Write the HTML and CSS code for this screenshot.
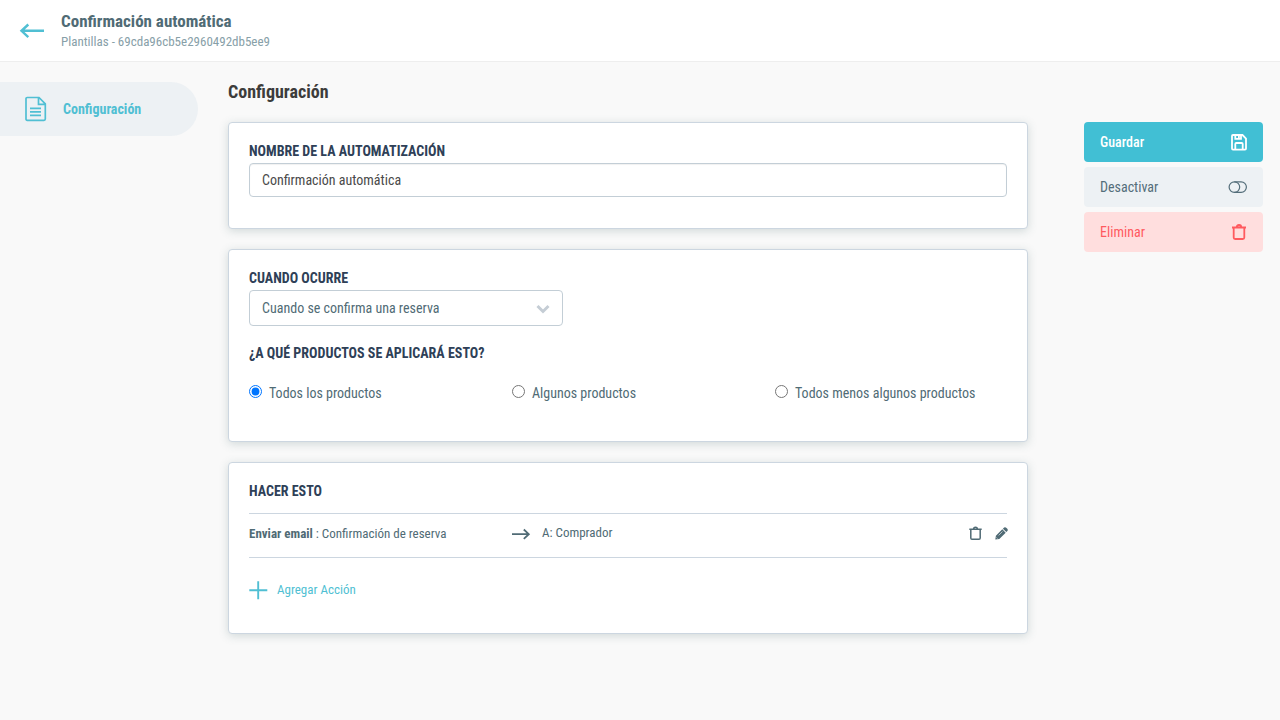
FILE: index.html
```
<!DOCTYPE html>
<html lang="es">
<head>
<meta charset="utf-8">
<title>Confirmación automática</title>
<link rel="stylesheet" href="styles.css">
</head>
<body>
<header class="topbar">
  <svg class="back" width="26" height="18" viewBox="0 0 26 18"><path d="M25 8.800H2.500M9.300 2.500L2.500 8.800l6.800 6.300" /></svg>
  <div class="titles">
    <h1><span class="t">Confirmación automática</span></h1>
    <p><span class="t">Plantillas - 69cda96cb5e2960492db5ee9</span></p>
  </div>
</header>
<div class="layout">
  <nav class="side">
    <a class="side-item">
      <svg width="22" height="26" viewBox="0 0 22 26"><path d="M1 2.600Q1 1.500 2.200 1.500H14L20.300 7.800V23Q20.300 24.300 19 24.300H2.300Q1 24.300 1 23ZM13.500 1.500V8.300H20.300M5 12.300H16M5 15.800H16M5 19.300H16"/></svg>
      <span class="t">Configuración</span>
    </a>
  </nav>
  <main class="content">
    <h2><span class="t">Configuración</span></h2>
    <section class="card card-name">
      <h3><span class="t">NOMBRE DE LA AUTOMATIZACIÓN</span></h3>
      <div class="field field-text"><span class="t">Confirmación automática</span></div>
    </section>
    <section class="card card-when">
      <h3><span class="t">CUANDO OCURRE</span></h3>
      <div class="field field-select"><span class="t">Cuando se confirma una reserva</span>
        <svg width="14" height="10" viewBox="0 0 14 10"><path d="M1.500 2l5.500 5.500L12.500 2"/></svg>
      </div>
      <h3 class="question"><span class="t">¿A QUÉ PRODUCTOS SE APLICARÁ ESTO?</span></h3>
      <div class="radios">
        <label><input type="radio" name="products" checked><span class="t">Todos los productos</span></label>
        <label><input type="radio" name="products"><span class="t">Algunos productos</span></label>
        <label><input type="radio" name="products"><span class="t">Todos menos algunos productos</span></label>
      </div>
    </section>
    <section class="card card-do">
      <h3><span class="t">HACER ESTO</span></h3>
      <div class="action">
        <div class="action-name"><span class="t"><b>Enviar email</b> : Confirmación de reserva</span></div>
        <svg class="arrow" width="19" height="12" viewBox="0 0 19 12"><path d="M0 6.200H17M11.800 1.500L16.800 6.200L11.800 10.900"/></svg>
        <div class="action-to"><span class="t">A: Comprador</span></div>
        <svg class="trash" width="13" height="15" viewBox="0 0 13 15"><path d="M.3 3.200H12.700M1.800 3.200V12Q1.800 13.300 3 13.300H10Q11.200 13.300 11.200 12V3.200M4.600 3.200Q4.600 1.200 6.500 1.200T8.400 3.200"/></svg>
        <svg class="pencil" width="13" height="13" viewBox="0 0 13 13"><path d="M.3 12.500L.9 8.700L7.300 2.300L10.700 5.700L4.300 12ZM7.900 1.700L9.100 .6Q10.200 -.2 11.200 .7L12.300 1.800Q13.200 2.800 12.400 3.900L11.300 5.100Z"/><path class="glint" d="M3.600 8.400L7.500 4.500M1.500 10.500L2.500 11.500"/></svg>
      </div>
      <a class="add"><svg width="19" height="19" viewBox="0 0 19 19"><path d="M9.200 .3V18.300M.3 9.300H18.300"/></svg><span class="t">Agregar Acción</span></a>
    </section>
  </main>
  <aside class="buttons">
    <button class="btn save"><span class="t">Guardar</span><svg width="16" height="17" viewBox="0 0 16 17"><path d="M1 2Q1 1 2 1H11.500L15 4.500V14.500Q15 15.600 14 15.600H2Q1 15.600 1 14.500ZM4.300 1V4.800H10V1M7.900 1V4M4.300 15.500V10Q4.300 9 5.300 9H10.700Q11.700 9 11.700 10V15.500"/></svg></button>
    <button class="btn toggle"><span class="t">Desactivar</span><svg width="19" height="12" viewBox="0 0 19 12"><rect x="1.100" y=".8" width="17.300" height="10.600" rx="5.300"/><path d="M6.400 .8a5.300 5.300 0 0 1 0 10.600"/></svg></button>
    <button class="btn remove"><span class="t">Eliminar</span><svg width="14" height="16" viewBox="0 0 14 16"><path d="M0 3.500H14M1.700 3.500V13.500Q1.700 15 3.200 15H10.800Q12.300 15 12.300 13.500V3.500M4.700 3.500Q4.700 1 7 1T9.300 3.500"/></svg></button>
  </aside>
</div>
</body>
</html>
```
FILE: styles.css
```
* { box-sizing: border-box; }
body { margin: 0; height: 720px; overflow: hidden; background: #f9f9f9; color: #546e7a; font: 14px/20px "Roboto Condensed", Roboto, sans-serif; font-stretch: 75%; }
h1, h2, h3, p { margin: 0; }
svg { display: block; flex: none; fill: none; stroke: currentColor; }
.t { display: inline-block; white-space: nowrap; }
.topbar { display: flex; height: 62px; padding: 11px 0 0 19px; background: #fff; border-bottom: 1px solid #eee; }
.back { margin-top: 11px; color: #50bfd3; stroke-width: 2.4; }
.titles { margin-left: 16px; }
h1 { font-size: 17px; line-height: 20px; color: #506b75; }
.titles p { font-size: 13px; line-height: 22px; color: #87a0a8; }
.layout { display: flex; align-items: flex-start; }
.side { width: 228px; padding-top: 20px; }
.side-item { display: flex; align-items: center; width: 198px; height: 54px; padding-left: 25px; gap: 16px; border-radius: 0 27px 27px 0; background: #edf1f4; color: #50bfd3; font-weight: 700; }
.side-item svg { stroke-width: 1.7; }
.content { width: 800px; padding-top: 20px; }
h2 { height: 40px; font-size: 18px; line-height: 20px; color: #3c3c3b; }
.card { padding: 18px 20px 0; margin-bottom: 20px; background: #fff; border: 1px solid #ccd6e0; border-radius: 4px; box-shadow: 0 2px 10px rgba(70,105,105,.22); }
.card-name { height: 107px; }
.card-when { height: 193px; }
.card-do { height: 172px; }
h3 { height: 22px; font-size: 14px; line-height: 21px; color: #2e4057; }
.field { display: flex; align-items: center; justify-content: space-between; border: 1px solid #c3ced6; border-radius: 4px; padding: 0 12px; color: #506b75; }
.field-text { height: 34px; color: #4a4a4a; box-shadow: inset 0 1px 1px rgba(0,0,0,.06); }
.field-select { width: 314px; height: 36px; }
.field-select svg { margin-top: 2px; color: #c5cdd5; stroke-width: 3; }
.question { margin-top: 17px; }
.radios { display: grid; grid-template-columns: 263px 263px 1fr; margin-top: 18px; color: #506b75; }
.radios label { display: flex; }
.radios input { width: 13px; height: 13px; margin: 2px 7px 0 0; }
.action { display: flex; height: 45px; margin-top: 10px; padding-top: 9px; border: solid #ccd6e0; border-width: 1px 0; font-size: 13px; color: #506b75; }
.action-name { width: 263px; padding-top: 1px; }
.arrow { margin: 5px 11px 0 0; stroke-width: 1.8; }
.action-to { flex: 1; }
.trash { margin: 3px 13px 0 0; stroke-width: 1.5; }
.pencil { margin: 4px -1px 0 0; fill: currentColor; stroke: none; }
.pencil .glint { stroke: #fff; stroke-width: .6; }
.add { display: flex; align-items: center; gap: 9px; margin-top: 22px; font-size: 13px; color: #50bfd3; }
.add svg { stroke-width: 1.9; }
.buttons { display: grid; gap: 5px; width: 179px; margin: 60px 0 0 56px; }
.btn { display: flex; align-items: center; justify-content: space-between; height: 40px; padding: 0 16px; border: 0; border-radius: 4px; font: inherit; font-stretch: 75%; }
.save { background: #41bfd4; color: #fff; font-weight: 500; }
.save svg { stroke-width: 1.8; }
.toggle { background: #edf1f4; color: #546e7a; }
.toggle svg { stroke-width: 1.2; }
.remove { background: #ffdede; color: #ff5a5f; }
.remove svg { margin-right: 1px; stroke-width: 1.8; }
```
